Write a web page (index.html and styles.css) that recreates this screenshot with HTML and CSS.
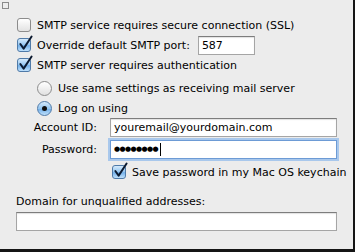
FILE: index.html
```html
<!DOCTYPE html>
<html lang="en">

<head>
    <meta charset="UTF-8">
    <title>SMTP settings</title>
    <link rel="stylesheet" href="styles.css">
</head>

<body>
    <div class="panel">
        <div class="corner"></div>
        <div class="opts">
            <div class="row">
                <span class="cb"></span>
                <span>SMTP service requires secure connection (SSL)</span>
            </div>
            <div class="row">
                <span class="cb on">
                    <svg class="tick" viewBox="0 0 16 16"><path d="M2.5 8.5 L6 13.5 L14.5 0.5" /></svg>
                </span>
                <span>Override default SMTP port:</span>
                <span class="field port">587</span>
            </div>
            <div class="row">
                <span class="cb on">
                    <svg class="tick" viewBox="0 0 16 16"><path d="M2.5 8.5 L6 13.5 L14.5 0.5" /></svg>
                </span>
                <span>SMTP server requires authentication</span>
            </div>
            <div class="radios">
                <div class="row">
                    <span class="rb"></span>
                    <span>Use same settings as receiving mail server</span>
                </div>
                <div class="row">
                    <span class="rb on"><span class="dot"></span></span>
                    <span>Log on using</span>
                </div>
            </div>
            <div class="form">
                <div class="frow">
                    <label>Account ID:</label>
                    <span class="field wide">youremail@yourdomain.com</span>
                </div>
                <div class="frow">
                    <label>Password:</label>
                    <span class="field wide focus"><span class="dots">&#9679;&#9679;&#9679;&#9679;&#9679;&#9679;&#9679;&#9679;</span><span class="caret"></span></span>
                </div>
                <div class="row save">
                    <span class="cb on">
                        <svg class="tick" viewBox="0 0 16 16"><path d="M2.5 8.5 L6 13.5 L14.5 0.5" /></svg>
                    </span>
                    <span>Save password in my Mac OS keychain</span>
                </div>
            </div>
        </div>
        <div class="domain">
            <div class="dlabel">Domain for unqualified addresses:</div>
            <span class="field full"></span>
        </div>
    </div>
</body>

</html>
```

FILE: styles.css
```css
* {
    margin: 0;
    padding: 0;
    box-sizing: border-box;
}

body {
    font-family: "DejaVu Sans", sans-serif;
    font-size: 11px;
    color: #000;
    background: #ececec;
    overflow: hidden;
}

.panel {
    width: 355px;
    height: 252px;
    background: #ececec;
    border-right: 2px solid #151515;
    border-bottom: 3px solid #151515;
    position: relative;
}

.corner {
    position: absolute;
    left: 2px;
    top: 2px;
    width: 7px;
    height: 7px;
    border: 1px solid #8a8a8a;
}

.opts {
    padding: 15px 0 0 17px;
}

.row {
    height: 20px;
    display: flex;
    align-items: center;
    gap: 6px;
}

.cb {
    width: 14px;
    height: 14px;
    border: 1px solid #8c8c8c;
    border-radius: 3px;
    background: linear-gradient(#ffffff, #e2e2e2);
    position: relative;
    flex: none;
}

.cb.on {
    border-color: #4f7aa8;
    background: linear-gradient(#d6ebfc 0%, #93c5f0 50%, #74b1ea 55%, #bfe0fb 100%);
}

.tick {
    position: absolute;
    left: 0;
    top: -3px;
    width: 15px;
    height: 15px;
    overflow: visible;
}

.tick path {
    fill: none;
    stroke: #0c1a30;
    stroke-width: 2.1;
    stroke-linecap: round;
    stroke-linejoin: round;
}

.field {
    display: inline-block;
    height: 19px;
    line-height: 17px;
    background: #fff;
    border: 1px solid #a5a5a5;
    border-top-color: #7d7d7d;
    box-shadow: inset 0 1px 1px rgba(0, 0, 0, 0.12);
    padding: 0 3px;
    white-space: nowrap;
}

.port {
    width: 57px;
    margin-left: 2px;
}

.radios {
    margin-top: 3px;
    padding-left: 20px;
}

.rb {
    width: 15px;
    height: 15px;
    border-radius: 50%;
    border: 1px solid #8c8c8c;
    background: linear-gradient(#ffffff, #e0e0e0);
    flex: none;
    display: flex;
    align-items: center;
    justify-content: center;
}

.rb.on {
    border-color: #4f7aa8;
    background: linear-gradient(#d6ebfc 0%, #93c5f0 50%, #74b1ea 55%, #bfe0fb 100%);
}

.dot {
    width: 5px;
    height: 5px;
    border-radius: 50%;
    background: #111;
}

.frow {
    display: flex;
    align-items: center;
    margin-bottom: 3px;
}

.frow label {
    width: 80px;
    text-align: right;
}

.wide {
    width: 227px;
    margin-left: 13px;
}

.focus {
    border: 1px solid #6d9bd5;
    box-shadow: 0 0 0 2px #a9c8ec;
    display: flex;
    align-items: center;
    padding-left: 3px;
}

.dots {
    font-size: 7px;
    letter-spacing: -0.6px;
}

.caret {
    display: inline-block;
    width: 1px;
    height: 13px;
    background: #000;
    margin-left: 2px;
}

.save {
    padding-left: 95px;
}

.domain {
    padding: 12px 0 0 16px;
}

.dlabel {
    height: 16px;
    line-height: 16px;
    margin-bottom: 2px;
}

.full {
    width: 321px;
}
```
